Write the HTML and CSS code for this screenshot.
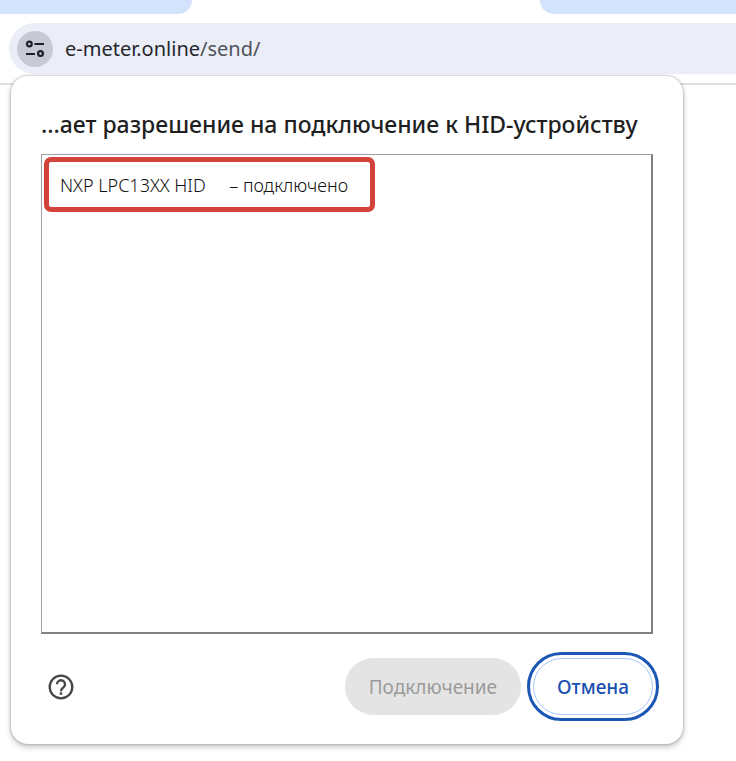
FILE: index.html
```html
<!DOCTYPE html>
<html lang="ru">
<head>
    <meta charset="UTF-8">
    <meta name="viewport" content="width=device-width, initial-scale=1.0">
    <title>e-meter.online</title>
    <link rel="stylesheet" href="styles.css">
</head>
<body>
    <header class="browser">
        <div class="tabs">
            <div class="tab-group left"></div>
            <div class="tab-group right"></div>
        </div>
        <div class="address-bar">
            <button class="site-info" type="button" aria-label="Сведения о сайте">
                <svg width="20" height="20" viewBox="0 0 20 20" fill="none" stroke="#1b1f2b" stroke-width="2.2">
                    <circle cx="4.3" cy="5" r="2.4"/>
                    <path d="M9.5 5h9.5M1 15h9"/>
                    <circle cx="15.5" cy="14.6" r="2.4"/>
                </svg>
            </button>
            <a class="url" href="#">e-meter.online<span class="path">/send/</span></a>
        </div>
    </header>
    <main class="dialog" role="dialog" aria-labelledby="dialogTitle">
        <h1 id="dialogTitle">...ает разрешение на подключение к HID-устройству</h1>
        <ul class="devices">
            <li class="device">
                <span>NXP LPC13XX HID</span>
                <span>– подключено</span>
            </li>
        </ul>
        <div class="actions">
            <button class="help" type="button" aria-label="Справка">
                <svg width="26" height="26" viewBox="0 0 26 26" fill="none" stroke="#444746" stroke-width="2.3">
                    <circle cx="13" cy="13" r="11.3"/>
                    <path d="M9 10.2a4 4 0 1 1 6.7 3c-1.5 1.3-2.7 2-2.7 4"/>
                    <path d="M13 18.3v2.5" stroke-width="2.5"/>
                </svg>
            </button>
            <button class="btn connect" type="button" disabled>Подключение</button>
            <button class="btn cancel" type="button">Отмена</button>
        </div>
    </main>
</body>
</html>
```

FILE: styles.css
```css
* {
    box-sizing: border-box;
}
body {
    margin: 0;
    background-color: #fff;
    font-family: "Noto Sans", "Open Sans", sans-serif;
    color: #1f1f1f;
}
.browser {
    height: 85px;
    border-bottom: 2px solid #dfdfe1;
}
.tabs {
    display: flex;
    justify-content: space-between;
    height: 14px;
}
.tab-group {
    background-color: #d3e3fb;
}
.tab-group.left {
    width: 192px;
    border-bottom-right-radius: 14px;
}
.tab-group.right {
    width: 196px;
    border-bottom-left-radius: 14px;
}
.address-bar {
    display: flex;
    align-items: center;
    gap: 12px;
    height: 51px;
    margin: 9px 0 0 9px;
    padding-left: 8px;
    border-radius: 26px 0 0 26px;
    background-color: #ebeef7;
}
.site-info {
    display: flex;
    align-items: center;
    justify-content: center;
    width: 36px;
    height: 36px;
    padding: 0;
    border: none;
    border-radius: 50%;
    background-color: #c7cad5;
}
.url {
    font-size: 20px;
    color: #25272d;
    text-decoration: none;
}
.path {
    color: #50535b;
}
/* the dialog hangs over the bottom edge of the toolbar */
.dialog {
    position: absolute;
    top: 76px;
    left: 11px;
    right: 53px;
    padding: 32px 30px 29px;
    border-radius: 17px;
    background-color: #fff;
    box-shadow: 0 0 2px 1px rgba(0, 0, 0, 0.16), 0 3px 6px rgba(0, 0, 0, 0.22);
}
h1 {
    margin: 0 0 14px;
    font-size: 23px;
    font-weight: 500;
    line-height: 32px;
    white-space: nowrap;
}
.devices {
    height: 480px;
    margin: 0 0 24px;
    padding: 2px;
    list-style: none;
    border: 1px solid #a0a0a0;
    border-right: 2px solid #808080;
    border-bottom: 2px solid #808080;
}
.device {
    display: flex;
    align-items: center;
    justify-content: space-between;
    width: 331px;
    height: 55px;
    padding: 0 22px 0 11px;
    border: 5px solid #d3423b;
    border-radius: 7px;
    font-size: 18px;
    font-weight: 300;
    color: #111;
}
.actions {
    display: flex;
    align-items: center;
    gap: 12px;
}
.help {
    display: flex;
    margin: 0 auto 0 7px;
    padding: 0;
    border: none;
    background: none;
}
.btn {
    height: 57px;
    padding: 0 23px;
    border: 1px solid transparent;
    border-radius: 29px;
    font-family: inherit;
    font-size: 19px;
}
.connect {
    background-color: #e4e4e4;
    color: #9b9b9b;
}
.cancel {
    border-color: #a8c7fa;
    outline: 3px solid #1a56b4;
    outline-offset: 3px;
    background-color: #fff;
    color: #1a50b0;
    font-weight: 500;
}
```
